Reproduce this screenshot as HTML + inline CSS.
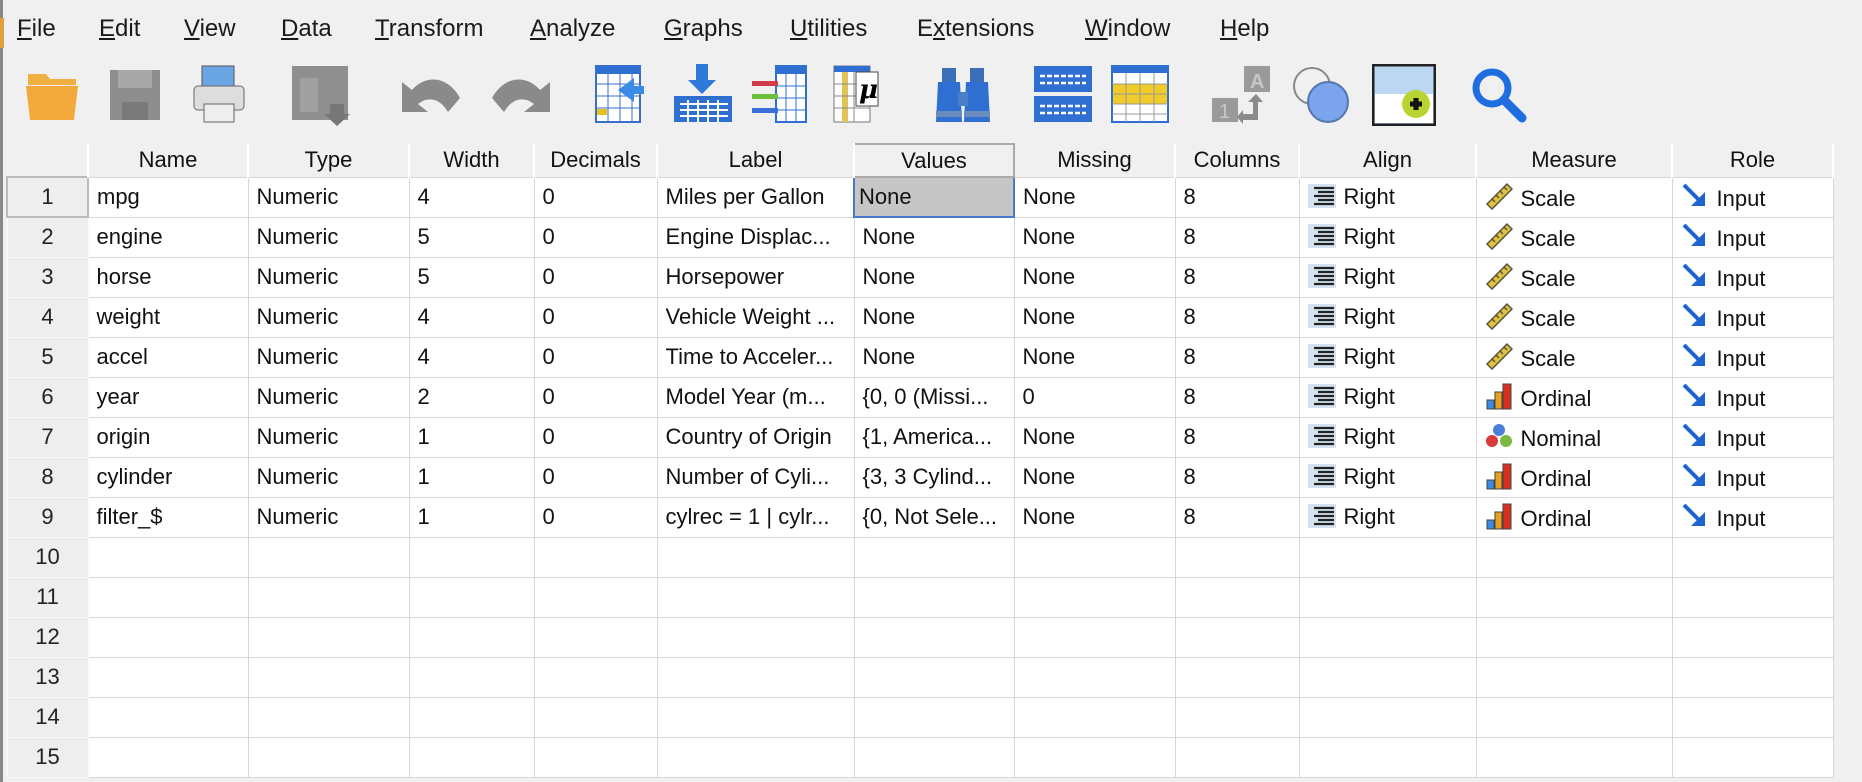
<!DOCTYPE html>
<html><head><meta charset="utf-8"><style>
*{margin:0;padding:0;box-sizing:border-box}
body{width:1862px;height:782px;overflow:hidden;background:#f0f0f0;font-family:"Liberation Sans",sans-serif;position:relative}
.menu{position:absolute;top:15px;font-size:24px;color:#1a1a1a}
.menu span{position:absolute;white-space:nowrap}
.menu u{text-decoration:underline}
.ic{position:absolute;top:64px}
table{position:absolute;left:6px;top:143px;border-collapse:collapse;table-layout:fixed;font-size:22px;color:#111}
td,th{height:40px;border:1px solid #d6d6d6;white-space:nowrap;overflow:hidden;background:#fff;font-weight:normal;padding-left:8px;text-align:left}
th{background:#f0f0f0;border:none;border-right:2px solid #fff;text-align:center;padding:0;height:33px}
td.rh{background:#eeeeee !important;text-align:center;padding:0;border:1px solid #fafafa;color:#222}
.ico{display:inline-block;vertical-align:-4px;margin-right:8px}
</style></head><body>
<div style="position:absolute;left:0;top:0;width:3px;height:782px;background:#888"></div>
<div style="position:absolute;left:0;top:18px;width:4px;height:30px;background:#e0a040"></div>
<div class="menu">
<span style="left:17px"><u>F</u>ile</span>
<span style="left:99px"><u>E</u>dit</span>
<span style="left:184px"><u>V</u>iew</span>
<span style="left:281px"><u>D</u>ata</span>
<span style="left:375px"><u>T</u>ransform</span>
<span style="left:530px"><u>A</u>nalyze</span>
<span style="left:664px"><u>G</u>raphs</span>
<span style="left:790px"><u>U</u>tilities</span>
<span style="left:917px">E<u>x</u>tensions</span>
<span style="left:1085px"><u>W</u>indow</span>
<span style="left:1220px"><u>H</u>elp</span>
</div>
<svg class="ic" style="left:24px" width="58" height="60"><path d="M4 10h18l4 5h26v6H4z" fill="#f0b040"/><path d="M2 22h52l-4 34H6z" fill="#f3a93a"/></svg>
<svg class="ic" style="left:108px" width="56" height="60"><rect x="2" y="6" width="50" height="50" fill="#8e8e8e"/><rect x="10" y="6" width="34" height="18" fill="#a8a8a8"/><rect x="14" y="38" width="26" height="18" fill="#7a7a7a"/></svg>
<svg class="ic" style="left:190px" width="58" height="62"><rect x="12" y="2" width="32" height="24" fill="#6aa6e6" stroke="#555"/><rect x="4" y="22" width="50" height="24" rx="4" fill="#ddd" stroke="#666"/><rect x="14" y="40" width="30" height="18" fill="#eee" stroke="#666"/></svg>
<svg class="ic" style="left:290px" width="64" height="64"><rect x="2" y="2" width="56" height="54" fill="#8f8f8f"/><rect x="10" y="14" width="18" height="34" fill="#a0a0a0"/><path d="M40 40h14v10h6l-13 12-13-12h6z" fill="#777"/></svg>
<svg class="ic" style="left:400px" width="62" height="58"><path d="M2 48V18l10 8c14-16 36-14 48 8l-12 14c-8-14-20-16-30-8l10 8z" fill="#8a8a8a"/></svg>
<svg class="ic" style="left:490px" width="62" height="58"><path d="M60 48V18l-10 8c-14-16-36-14-48 8l12 14c8-14 20-16 30-8l-10 8z" fill="#8a8a8a"/></svg>
<svg class="ic" style="left:594px" width="58" height="62"><rect x="2" y="2" width="44" height="56" fill="#fff" stroke="#3a6fc8" stroke-width="2"/><rect x="2" y="2" width="44" height="8" fill="#2e6fd1"/><path d="M2 20h44M2 32h44M2 44h44M14 10v48M26 10v48M38 10v48" stroke="#3a6fc8"/><rect x="3" y="45" width="10" height="6" fill="#e8c21c"/><path d="M40 14l-16 12 16 12v-8h10v-8H40z" fill="#3a8ae6"/></svg>
<svg class="ic" style="left:672px" width="62" height="62"><path d="M24 0h12v16h8L30 30 16 16h8z" fill="#2e79d9"/><rect x="2" y="32" width="58" height="26" fill="#2e6fd1"/><path d="M8 40h48M8 46h48M8 52h48M16 36v22M26 36v22M36 36v22M46 36v22" stroke="#fff" stroke-width="2"/></svg>
<svg class="ic" style="left:750px" width="60" height="62"><rect x="26" y="2" width="30" height="56" fill="#fff" stroke="#2e6fd1" stroke-width="2"/><rect x="26" y="2" width="30" height="8" fill="#2e6fd1"/><path d="M26 22h30M26 34h30M26 46h30M36 10v48M46 10v48" stroke="#2e6fd1"/><rect x="2" y="17" width="26" height="5" fill="#d33a4a"/><rect x="2" y="30" width="26" height="5" fill="#6cc03c"/><rect x="2" y="44" width="26" height="5" fill="#3a6fd9"/></svg>
<svg class="ic" style="left:832px" width="60" height="62"><rect x="2" y="2" width="36" height="56" fill="#fff" stroke="#777"/><rect x="2" y="2" width="36" height="6" fill="#2e6fd1"/><rect x="10" y="8" width="6" height="50" fill="#e2c25a"/><path d="M2 20h36M2 32h36M2 44h36M22 8v50" stroke="#888"/><rect x="24" y="8" width="22" height="34" fill="#fff" stroke="#444"/><text x="27" y="34" font-size="26" font-family="DejaVu Serif,serif" font-style="italic" font-weight="bold">μ</text></svg>
<svg class="ic" style="left:934px" width="60" height="62"><path d="M8 4h14v14H8zM36 4h14v14H36z" fill="#3b6fb8"/><path d="M4 18h22l2 40H2zM32 18h22l2 40H30z" fill="#2e6fd1"/><rect x="24" y="28" width="10" height="14" fill="#4a7fc8"/><path d="M2 50h26M30 50h26" stroke="#6b8cc0" stroke-width="6"/></svg>
<svg class="ic" style="left:1032px" width="62" height="62"><rect x="2" y="2" width="58" height="26" fill="#2e6fd1"/><rect x="2" y="32" width="58" height="26" fill="#2e6fd1"/><path d="M8 12h46M8 19h46M8 42h46M8 49h46" stroke="#fff" stroke-width="2.5" stroke-dasharray="5 2"/></svg>
<svg class="ic" style="left:1110px" width="60" height="62"><rect x="2" y="2" width="56" height="56" fill="#fff" stroke="#2e6fd1" stroke-width="2"/><rect x="2" y="2" width="56" height="7" fill="#2e6fd1"/><rect x="3" y="20" width="54" height="20" fill="#f0cc2a"/><path d="M2 20h56M2 30h56M2 40h56M2 50h56M16 9v49M30 9v49M44 9v49" stroke="#999"/></svg>
<svg class="ic" style="left:1210px" width="66" height="62"><rect x="34" y="2" width="26" height="26" fill="#9a9a9a"/><text x="40" y="24" font-size="20" fill="#c8c8c8" font-weight="bold">A</text><rect x="2" y="34" width="26" height="24" fill="#9a9a9a"/><text x="9" y="54" font-size="20" fill="#c8c8c8">1</text><path d="M46 30l-8 8h5v12h-10v-4l-6 7 6 7v-4h15V38h5z" fill="#8a8a8a"/></svg>
<svg class="ic" style="left:1290px" width="64" height="64"><circle cx="22" cy="22" r="18" fill="none" stroke="#888" stroke-width="2"/><circle cx="38" cy="38" r="20" fill="#7ba3ee" stroke="#5577aa" stroke-width="2"/></svg>
<svg class="ic" style="left:1372px" width="64" height="62"><rect x="1" y="1" width="62" height="60" fill="#bcd7f2" stroke="#222" stroke-width="3"/><rect x="3" y="30" width="58" height="29" fill="#fff"/><circle cx="44" cy="40" r="14" fill="#b8d430"/><path d="M38 40h12M44 34v12" stroke="#111" stroke-width="5"/></svg>
<svg class="ic" style="left:1468px" width="64" height="64"><circle cx="24" cy="24" r="16" fill="none" stroke="#1e6ee0" stroke-width="7"/><path d="M36 36l18 18" stroke="#1e6ee0" stroke-width="9" stroke-linecap="round"/></svg>

<svg width="0" height="0" style="position:absolute"><defs>
<symbol id="al" viewBox="0 0 28 24"><rect width="28" height="24" fill="#d4e2f2"/><path d="M6 4h20M10 8h16M6 12h20M10 16h16M6 20h20" stroke="#222" stroke-width="2.2"/></symbol>
<symbol id="ru" viewBox="0 0 28 28"><path d="M2 22L22 2l5 5L7 27z" fill="#e2c23a" stroke="#554" stroke-width="1.5"/><path d="M7 17l3 3M11 13l3 3M15 9l3 3M19 5l3 3" stroke="#554" stroke-width="1.5"/></symbol>
<symbol id="ba" viewBox="0 0 28 28"><rect x="2" y="18" width="7" height="9" fill="#3a8ae6" stroke="#444"/><rect x="10" y="10" width="7" height="17" fill="#e8a020" stroke="#444"/><rect x="18" y="2" width="8" height="25" fill="#d83020" stroke="#444"/></symbol>
<symbol id="no" viewBox="0 0 28 28"><circle cx="14" cy="8" r="6" fill="#4a7fd8"/><circle cx="7" cy="19" r="6" fill="#d83a3a"/><circle cx="21" cy="19" r="6" fill="#7ab840"/></symbol>
<symbol id="ar" viewBox="0 0 28 28"><path d="M3 3l17 17" stroke="#1e64d0" stroke-width="4"/><path d="M24 24H10l14-14z" fill="#1e64d0"/></symbol>
</defs></svg>

<table>
<colgroup><col style="width:81px"><col style="width:160px"><col style="width:161px"><col style="width:125px"><col style="width:123px"><col style="width:197px"><col style="width:160px"><col style="width:161px"><col style="width:124px"><col style="width:177px"><col style="width:196px"><col style="width:161px"></colgroup>
<tr><th style="background:#f0f0f0"></th><th>Name</th><th>Type</th><th>Width</th><th>Decimals</th><th>Label</th><th style="border:2px solid #aaa">Values</th><th>Missing</th><th>Columns</th><th>Align</th><th>Measure</th><th>Role</th></tr>
<tr><td class="rh" style="border:2px solid #bbb;background:#f4f4f4">1</td><td>mpg</td><td>Numeric</td><td>4</td><td>0</td><td>Miles per Gallon</td><td style="background:#c6c6c6;border:2px solid #4a78d0;padding-left:4px">None</td><td>None</td><td>8</td><td><svg class="ico" width="28" height="24"><use href="#al"/></svg>Right</td><td><svg class="ico" width="28" height="28"><use href="#ru"/></svg>Scale</td><td><svg class="ico" width="28" height="28"><use href="#ar"/></svg>Input</td></tr>
<tr><td class="rh">2</td><td>engine</td><td>Numeric</td><td>5</td><td>0</td><td>Engine Displac...</td><td>None</td><td>None</td><td>8</td><td><svg class="ico" width="28" height="24"><use href="#al"/></svg>Right</td><td><svg class="ico" width="28" height="28"><use href="#ru"/></svg>Scale</td><td><svg class="ico" width="28" height="28"><use href="#ar"/></svg>Input</td></tr>
<tr><td class="rh">3</td><td>horse</td><td>Numeric</td><td>5</td><td>0</td><td>Horsepower</td><td>None</td><td>None</td><td>8</td><td><svg class="ico" width="28" height="24"><use href="#al"/></svg>Right</td><td><svg class="ico" width="28" height="28"><use href="#ru"/></svg>Scale</td><td><svg class="ico" width="28" height="28"><use href="#ar"/></svg>Input</td></tr>
<tr><td class="rh">4</td><td>weight</td><td>Numeric</td><td>4</td><td>0</td><td>Vehicle Weight ...</td><td>None</td><td>None</td><td>8</td><td><svg class="ico" width="28" height="24"><use href="#al"/></svg>Right</td><td><svg class="ico" width="28" height="28"><use href="#ru"/></svg>Scale</td><td><svg class="ico" width="28" height="28"><use href="#ar"/></svg>Input</td></tr>
<tr><td class="rh">5</td><td>accel</td><td>Numeric</td><td>4</td><td>0</td><td>Time to Acceler...</td><td>None</td><td>None</td><td>8</td><td><svg class="ico" width="28" height="24"><use href="#al"/></svg>Right</td><td><svg class="ico" width="28" height="28"><use href="#ru"/></svg>Scale</td><td><svg class="ico" width="28" height="28"><use href="#ar"/></svg>Input</td></tr>
<tr><td class="rh">6</td><td>year</td><td>Numeric</td><td>2</td><td>0</td><td>Model Year (m...</td><td>{0, 0 (Missi...</td><td>0</td><td>8</td><td><svg class="ico" width="28" height="24"><use href="#al"/></svg>Right</td><td><svg class="ico" width="28" height="28"><use href="#ba"/></svg>Ordinal</td><td><svg class="ico" width="28" height="28"><use href="#ar"/></svg>Input</td></tr>
<tr><td class="rh">7</td><td>origin</td><td>Numeric</td><td>1</td><td>0</td><td>Country of Origin</td><td>{1, America...</td><td>None</td><td>8</td><td><svg class="ico" width="28" height="24"><use href="#al"/></svg>Right</td><td><svg class="ico" width="28" height="28"><use href="#no"/></svg>Nominal</td><td><svg class="ico" width="28" height="28"><use href="#ar"/></svg>Input</td></tr>
<tr><td class="rh">8</td><td>cylinder</td><td>Numeric</td><td>1</td><td>0</td><td>Number of Cyli...</td><td>{3, 3 Cylind...</td><td>None</td><td>8</td><td><svg class="ico" width="28" height="24"><use href="#al"/></svg>Right</td><td><svg class="ico" width="28" height="28"><use href="#ba"/></svg>Ordinal</td><td><svg class="ico" width="28" height="28"><use href="#ar"/></svg>Input</td></tr>
<tr><td class="rh">9</td><td>filter_$</td><td>Numeric</td><td>1</td><td>0</td><td>cylrec = 1 | cylr...</td><td>{0, Not Sele...</td><td>None</td><td>8</td><td><svg class="ico" width="28" height="24"><use href="#al"/></svg>Right</td><td><svg class="ico" width="28" height="28"><use href="#ba"/></svg>Ordinal</td><td><svg class="ico" width="28" height="28"><use href="#ar"/></svg>Input</td></tr>
<tr><td class="rh">10</td><td></td><td></td><td></td><td></td><td></td><td></td><td></td><td></td><td></td><td></td><td></td></tr>
<tr><td class="rh">11</td><td></td><td></td><td></td><td></td><td></td><td></td><td></td><td></td><td></td><td></td><td></td></tr>
<tr><td class="rh">12</td><td></td><td></td><td></td><td></td><td></td><td></td><td></td><td></td><td></td><td></td><td></td></tr>
<tr><td class="rh">13</td><td></td><td></td><td></td><td></td><td></td><td></td><td></td><td></td><td></td><td></td><td></td></tr>
<tr><td class="rh">14</td><td></td><td></td><td></td><td></td><td></td><td></td><td></td><td></td><td></td><td></td><td></td></tr>
<tr><td class="rh">15</td><td></td><td></td><td></td><td></td><td></td><td></td><td></td><td></td><td></td><td></td><td></td></tr>
</table>
</body></html>
